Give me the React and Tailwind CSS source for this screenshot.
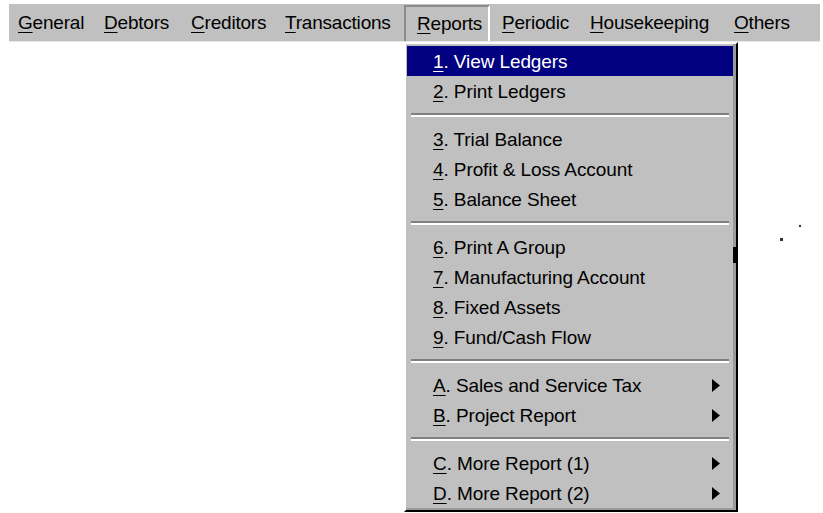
// w = width of each menu bar slot, so labels sit at fixed spots
const menuBar = [
  { key: "G", rest: "eneral", w: 85 },
  { key: "D", rest: "ebtors", w: 87 },
  { key: "C", rest: "reditors", w: 94 },
  { key: "T", rest: "ransactions", w: 129 },
  { key: "R", rest: "eports", w: 86, open: true },
  { key: "P", rest: "eriodic", w: 90 },
  { key: "H", rest: "ousekeeping", w: 144 },
  { key: "O", rest: "thers", w: 88 },
];

// null marks a separator line
const reportItems = [
  { key: "1", label: ". View Ledgers", active: true },
  { key: "2", label: ". Print Ledgers" },
  null,
  { key: "3", label: ". Trial Balance" },
  { key: "4", label: ". Profit & Loss Account" },
  { key: "5", label: ". Balance Sheet" },
  null,
  { key: "6", label: ". Print A Group" },
  { key: "7", label: ". Manufacturing Account" },
  { key: "8", label: ". Fixed Assets" },
  { key: "9", label: ". Fund/Cash Flow" },
  null,
  { key: "A", label: ". Sales and Service Tax", sub: true },
  { key: "B", label: ". Project Report", sub: true },
  null,
  { key: "C", label: ". More Report (1)", sub: true },
  { key: "D", label: ". More Report (2)", sub: true },
];

function Arrow({ light }) {
  return (
    <svg width="8" height="13" viewBox="0 0 8 13" className="absolute right-[13px] top-[9px]">
      <polygon points="0,0 8,6.5 0,13" fill={light ? "#fff" : "#000"} />
    </svg>
  );
}

export default function App() {
  return (
    <div
      className="relative w-[823px] h-[513px] bg-white overflow-hidden text-black"
      style={{ fontFamily: '"Liberation Sans", Arial, sans-serif' }}
    >
      <div className="ml-[9px] mt-[4px] w-[811px] h-[38px] bg-[#c0c0c0] border-b border-[#e8e8e8] flex items-center text-[19px] leading-none tracking-[-0.2px]">
        {menuBar.map((m, i) => (
          <div
            key={i}
            className={
              m.open
                ? "shrink-0 h-[36px] flex items-center pl-[11px] border-l-2 border-t-2 border-[#8a8a8a] border-r-2 border-r-white"
                : "shrink-0 h-[36px] flex items-center pl-[10px]"
            }
            style={{ width: m.w, paddingLeft: i === 0 ? 9 : m.open ? 11 : i === 5 ? 12 : 10 }}
          >
            <span>
              <u className="underline-offset-[3px]">{m.key}</u>
              {m.rest}
            </span>
          </div>
        ))}
      </div>

      <div className="absolute left-[404px] top-[42px] w-[334px] h-[470px] bg-[#c0c0c0] border-l-2 border-t-2 border-white border-r-2 border-r-black border-b-2 border-b-black">
        <div className="h-full border-r-[3px] border-b-2 border-[#9a9a9a] pl-[1px] pt-[2px] flex flex-col text-[19px] leading-none tracking-[-0.1px]">
          {reportItems.map((it, i) =>
            it === null ? (
              <div key={i} className="h-[18px] flex flex-col justify-center px-[4px]">
                <div className="h-[2px] bg-[#808080]" />
                <div className="h-[2px] bg-white" />
              </div>
            ) : (
              <div
                key={i}
                className={
                  it.active
                    ? "relative h-[30px] flex items-center pl-[26px] bg-[#000080] text-white"
                    : "relative h-[30px] flex items-center pl-[26px]"
                }
              >
                <span>
                  <u className="underline-offset-[3px]">{it.key}</u>
                  {it.label}
                </span>
                {it.sub && <Arrow light={it.active} />}
              </div>
            )
          )}
        </div>
      </div>

      {/* specks on the page */}
      <div className="absolute left-[733px] top-[247px] w-[3px] h-[16px] bg-black" />
      <div className="absolute left-[799px] top-[225px] w-[2px] h-[2px] bg-[#333]" />
      <div className="absolute left-[780px] top-[238px] w-[3px] h-[3px] bg-[#333]" />
    </div>
  );
}
